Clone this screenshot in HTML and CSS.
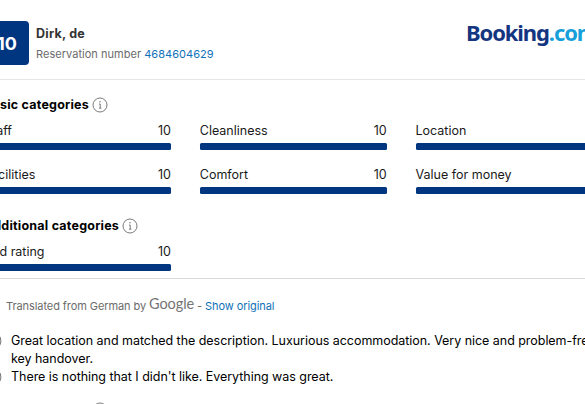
FILE: index.html
```
<!DOCTYPE html>
<html lang="en">
<head>
  <meta charset="UTF-8" />
  <meta name="viewport" content="width=device-width, initial-scale=1.0"/>
  <title>Guest review</title>
  <link rel="stylesheet" href="styles.css">
</head>

<body>
  <div class="review">

    <header class="review-header">
      <div class="score">10</div>
      <div class="guest">
        <div class="guest-name"><span>Dirk, de</span></div>
        <div class="reservation"><span>Reservation number <a href="#">4684604629</a></span></div>
      </div>
      <div class="logo"><span class="logo-name">Booking</span><span class="logo-com">.com</span></div>
    </header>

    <!-- Scores -->
    <section class="categories">
      <h2>
        <span>Basic categories</span>
        <svg class="info" viewBox="0 0 16 16"><circle cx="8" cy="8" r="7"/><path d="M7 7h1.2v4M7 11.2h2.4"/><circle class="dot" cx="8" cy="4.7" r=".7"/></svg>
      </h2>
      <div class="grid">
        <div class="item"><div class="label"><span>Staff</span><span>10</span></div><div class="bar"></div></div>
        <div class="item"><div class="label"><span>Cleanliness</span><span>10</span></div><div class="bar"></div></div>
        <div class="item"><div class="label"><span>Location</span><span>10</span></div><div class="bar"></div></div>
        <div class="item"><div class="label"><span>Facilities</span><span>10</span></div><div class="bar"></div></div>
        <div class="item"><div class="label"><span>Comfort</span><span>10</span></div><div class="bar"></div></div>
        <div class="item"><div class="label"><span>Value for money</span><span>10</span></div><div class="bar"></div></div>
      </div>
      <h2 class="additional">
        <span>Additional categories</span>
        <svg class="info" viewBox="0 0 16 16"><circle cx="8" cy="8" r="7"/><path d="M7 7h1.2v4M7 11.2h2.4"/><circle class="dot" cx="8" cy="4.7" r=".7"/></svg>
      </h2>
      <div class="grid">
        <div class="item"><div class="label"><span>Bed rating</span><span>10</span></div><div class="bar"></div></div>
      </div>
    </section>

    <!-- Review text -->
    <section class="comments">
      <p class="translated"><span>Translated from German by</span> <span class="google">Google</span> <span>- <a href="#">Show original</a></span></p>
      <div class="comment">
        <svg class="face" viewBox="0 0 16 16"><circle cx="8" cy="8" r="7"/><path d="M5 10q3 3 6 0M5.5 6v1M10.5 6v1"/></svg>
        <p>Great location and matched the description. Luxurious accommodation. Very nice and problem-free<br>key handover.</p>
      </div>
      <div class="comment">
        <svg class="face" viewBox="0 0 16 16"><circle cx="8" cy="8" r="7"/><path d="M5 11q3-3 6 0M5.5 6v1M10.5 6v1"/></svg>
        <p>There is nothing that I didn't like. Everything was great.</p>
      </div>
      <svg class="info next-info" viewBox="0 0 16 16"><circle cx="8" cy="8" r="7"/></svg>
    </section>

  </div>
</body>
</html>
```

FILE: styles.css
```
* {
  box-sizing: border-box;
}

body {
  margin: 0;
  height: 404px;
  overflow: hidden;
  background: #fff;
  color: #1a1a1a;
  font-family: Inter, "Liberation Sans", sans-serif;
  font-size: 12.5px;
  line-height: 18px;
}

p, h2 {
  margin: 0;
}

a {
  color: #0f72b8;
  text-decoration: none;
}

/* the card is wider than the window on both sides */
.review {
  width: 618px;
  margin-left: -16px;
  white-space: nowrap;
}

.review-header {
  display: flex;
  height: 80px;
  padding-top: 21px;
  border-bottom: 1px solid #e6e6e6;
}

.score {
  width: 45px;
  height: 44px;
  padding-left: 1px;
  border-radius: 4px;
  background: #003580;
  color: #fff;
  font-size: 18px;
  font-weight: 700;
  line-height: 45px;
  text-align: center;
}

.guest {
  flex: 1;
  padding: 4px 0 0 7px;
}

.guest-name {
  color: #333;
  font-weight: 700;
  letter-spacing: 0.25px;
}

.reservation {
  margin-top: 2px;
  color: #6b6b6b;
  font-size: 11px;
  letter-spacing: 0.03px;
}

.logo {
  width: 136px;
  font-family: "Noto Sans", sans-serif;
  font-size: 22px;
  font-weight: 700;
  line-height: 23px;
  letter-spacing: -1.1px;
}

.logo-name {
  color: #14357f;
}

.logo-com {
  color: #179fdb;
}

.categories {
  height: 199px;
  padding-top: 16px;
  border-bottom: 1px solid #d9d9d9;
}

h2 {
  display: flex;
  align-items: center;
  gap: 3px;
  height: 18px;
  color: #000;
  font-size: 12.5px;
  font-weight: 700;
  letter-spacing: 0.22px;
}

.info, .face {
  flex: none;
  width: 16px;
  height: 16px;
  fill: none;
  stroke: #6b6b6b;
  stroke-width: 0.9;
}

.info .dot {
  fill: #6b6b6b;
  stroke: none;
}

.grid {
  display: grid;
  grid-template-columns: repeat(3, 187px);
  gap: 16px 28.75px;
  margin-top: 8px;
}

.label {
  display: flex;
  justify-content: space-between;
  height: 21px;
}

.bar {
  height: 7px;
  border-radius: 1.5px;
  background: #003580;
}

.additional {
  margin-top: 23px;
}

.comments {
  padding-top: 18px;
}

.translated {
  height: 18px;
  padding-left: 22px;
  color: #6b6b6b;
  font-size: 11px;
  letter-spacing: -0.08px;
}

.google {
  color: #757575;
  font-family: Lato, sans-serif;
  font-size: 14.5px;
  line-height: 14px;
  vertical-align: 1px;
  letter-spacing: -0.1px;
}

.comment {
  display: flex;
  gap: 9px;
  color: #000;
  letter-spacing: -0.04px;
}

.translated + .comment {
  margin-top: 17px;
}

.face {
  width: 18px;
  height: 18px;
}

.next-info {
  display: block;
  margin: 16px 0 0 108px;
}
```
